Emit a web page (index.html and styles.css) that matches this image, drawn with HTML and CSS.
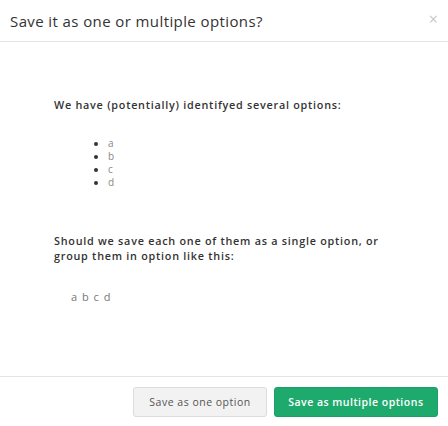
FILE: index.html
```html
<!DOCTYPE html>
<html>
<head>
<meta charset="utf-8">
<link rel="stylesheet" href="styles.css">
</head>
<body>
<div class="modal">
  <div class="header">
    <h1 class="title">Save it as one or multiple options?</h1>
    <span class="close">&times;</span>
  </div>
  <div class="body">
    <p class="lead">We have (potentially) identifyed several options:</p>
    <ul class="opts">
      <li>a</li>
      <li>b</li>
      <li>c</li>
      <li>d</li>
    </ul>
    <p class="lead">Should we save each one of them as a single option, or group them in option like this:</p>
    <div class="group">a b c d</div>
  </div>
  <div class="footer">
    <button class="btn btn-default">Save as one option</button>
    <button class="btn btn-primary">Save as multiple options</button>
  </div>
</div>
</body>
</html>
```
FILE: styles.css
```css
html, body {
  margin: 0;
  padding: 0;
  background: #fff;
}
body {
  font-family: "Open Sans", "Noto Sans", sans-serif;
  color: #333;
}
.modal {
  width: 448px;
  height: 426px;
  display: flex;
  flex-direction: column;
}
.header {
  height: 42px;
  border-bottom: 1px solid #e5e5e5;
  display: flex;
  align-items: center;
  justify-content: space-between;
  padding: 0 10px;
  box-sizing: border-box;
}
.title {
  margin: 0;
  font-size: 15px;
  font-weight: 400;
  letter-spacing: 0.4px;
  color: #333;
}
.close {
  color: #c8c8c8;
  font-size: 16px;
  line-height: 1;
  margin-top: -4px;
}
.body {
  flex: 1;
  padding: 55px 58px 0 54px;
}
.lead {
  margin: 0;
  font-size: 10.8px;
  font-weight: 600;
  line-height: 15px;
  letter-spacing: 0.75px;
  color: #333;
}
.opts {
  margin: 25px 0 44px;
  padding-left: 54px;
  font-size: 10px;
  line-height: 13px;
  color: #888;
}
.opts li::marker {
  color: #333;
}
.group {
  margin-top: 26px;
  padding-left: 17px;
  font-size: 11px;
  color: #777;
  letter-spacing: 1px;
}
.footer {
  height: 50px;
  border-top: 1px solid #e5e5e5;
  display: flex;
  align-items: center;
  justify-content: flex-end;
  gap: 7px;
  padding: 0 10px;
  box-sizing: border-box;
}
.btn {
  height: 30px;
  border-radius: 3px;
  font-family: "Open Sans", "Noto Sans", sans-serif;
  font-size: 10.5px;
  letter-spacing: 0.5px;
  padding: 0 15px;
  cursor: pointer;
}
.btn-default {
  background: #f2f2f2;
  border: 1px solid #dcdcdc;
  color: #555;
}
.btn-primary {
  background: #1eaa6c;
  border: 1px solid #1ca066;
  color: #fff;
  font-weight: 600;
  padding: 0 13.5px;
}
```
